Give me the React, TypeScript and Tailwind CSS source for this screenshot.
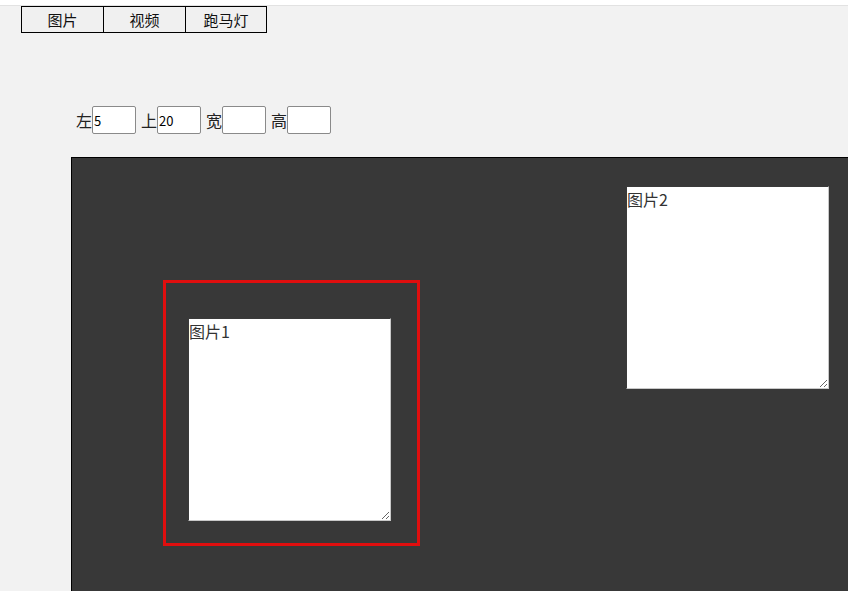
import React from "react";

const font = { fontFamily: '"Noto Sans CJK SC", "Noto Sans", sans-serif' };

function Field({ label, value }: { label: string; value: string }) {
  return (
    <div className="flex items-center">
      <span className="text-[16px] leading-none text-[#222]">{label}</span>
      <input
        defaultValue={value}
        className="w-[44px] h-[28px] border border-[#8a8a8a] rounded-[2px] bg-white px-[1px] text-[13px] text-black outline-none"
        style={font}
      />
    </div>
  );
}

function Box({ label, className }: { label: string; className: string }) {
  return (
    <textarea
      defaultValue={label}
      className={
        "absolute w-[203px] h-[203px] bg-white border border-t-[#3a3a3a] border-l-[#3a3a3a] border-r-[#c8c8c8] border-b-[#c8c8c8] px-0 pt-[1px] text-[16px] leading-[22px] text-[#333] outline-none " +
        className
      }
      style={font}
    />
  );
}

export default function App() {
  return (
    <div className="w-[848px] h-[591px] overflow-hidden bg-[#f2f2f2]" style={font}>
      <div className="h-[6px] bg-white border-b border-[#e2e2e2]" />
      <div className="flex ml-[21px]">
        {["图片", "视频", "跑马灯"].map((t, i) => (
          <button
            key={t}
            className={
              "h-[27px] border border-black bg-[#f0f0f0] text-[15px] leading-none text-[#111] " +
              (i > 0 ? "-ml-px " : "") +
              (i === 2 ? "w-[82px]" : "w-[83px]")
            }
            style={font}
          >
            {t}
          </button>
        ))}
      </div>
      <div className="flex items-center gap-[5px] ml-[76px] mt-[73px]">
        <Field label="左" value="5" />
        <Field label="上" value="20" />
        <Field label="宽" value="" />
        <Field label="高" value="" />
      </div>
      <div className="relative ml-[71px] mt-[23px] w-[800px] h-[600px] bg-[#383838] border-l border-t border-black">
        <div className="absolute left-[91px] top-[122px] w-[257px] h-[266px] border-[3px] border-[#e00e0e]" />
        <Box label="图片1" className="left-[116px] top-[160px]" />
        <Box label="图片2" className="left-[554px] top-[28px]" />
      </div>
    </div>
  );
}
